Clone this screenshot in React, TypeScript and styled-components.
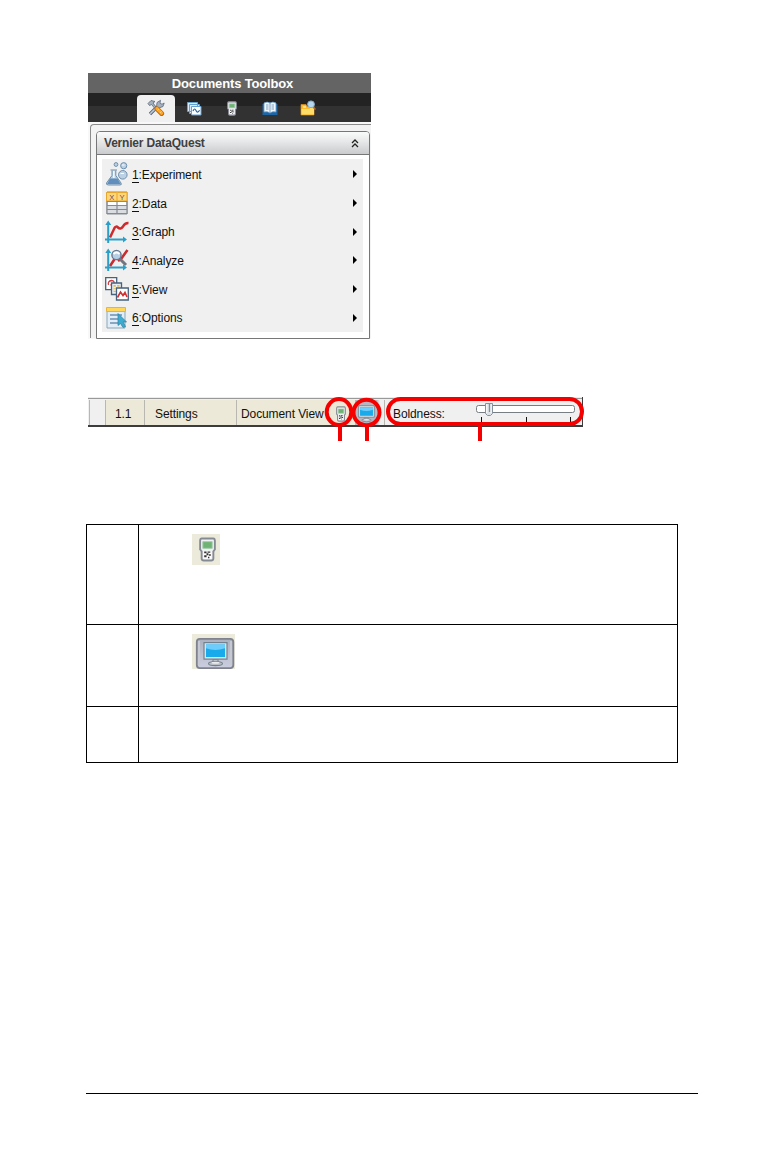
import React, { ReactNode } from 'react';
import styled, { createGlobalStyle } from 'styled-components';

const GlobalStyle = createGlobalStyle`
  * {
    box-sizing: border-box;
  }

  body {
    margin: 0;
    background: #fff;
    font-family: "Liberation Sans", Arial, sans-serif;
    font-size: 12px;
    color: #111;
  }
`;

const Page = styled.main`
  display: flex;
  flex-direction: column;
  align-items: flex-start;
  width: 764px;
  height: 1160px;
  padding: 73px 66px 0 86px;
`;

const Toolbox = styled.section`
  width: 283px;
  height: 266px;
  margin-left: 2px;
  background: #f8f8f8;
`;

const ToolboxTitle = styled.h1`
  height: 20px;
  margin: 0;
  padding-left: 6px;
  background: #646464;
  color: #fff;
  font-size: 13px;
  line-height: 21px;
  letter-spacing: -0.16px;
  text-align: center;
`;

const TabBar = styled.div`
  display: flex;
  height: 29px;
  padding: 2px 0 0 49px;
  background: linear-gradient(#232323 0 13px, #323232 13px 100%);
`;

const Tab = styled.div<{ $active?: boolean }>`
  display: flex;
  align-items: center;
  justify-content: center;
  width: 38px;
  height: 27px;
  padding-bottom: 1px;
  border-radius: 4px 4px 0 0;
  background: ${(props) => (props.$active ? '#f0f0f0' : 'transparent')};
`;

const ToolboxBody = styled.div`
  height: 214px;
  margin: 2px 0 0 2px;
  padding: 6px 1px 0 5px;
  border: solid #8b8b8b;
  border-width: 1px 0 0 1px;
  border-radius: 4px 0 0 0;
  background: #f3f3f3;
`;

const Panel = styled.div`
  height: 208px;
  border: 1px solid #777;
  border-radius: 4px 4px 0 0;
  background: #fff;
  overflow: hidden;
`;

const PanelHeader = styled.div`
  display: flex;
  align-items: center;
  justify-content: space-between;
  height: 23px;
  padding: 0 10px 0 7px;
  border-bottom: 1px solid #777;
  background: linear-gradient(#fbfbfb, #e6e7e8 45%, #c9cbcd);
  color: #404040;
  font-weight: bold;
  letter-spacing: -0.2px;
`;

const Menu = styled.ul`
  display: flex;
  flex-direction: column;
  height: 173px;
  margin: 4px 6px 0 5px;
  padding: 1px 6px 0 3px;
  background: #f0f0f0;
  list-style: none;
`;

const MenuItem = styled.li`
  display: flex;
  align-items: center;
  height: 28.75px;
`;

const MenuLabel = styled.span`
  flex: 1;
  margin-left: 3px;
  padding-top: 2px;
  letter-spacing: -0.1px;
`;

const Shortcut = styled.span`
  display: inline-block;
  height: 14px;
  line-height: 13px;
  border-bottom: 1px solid #111;
`;

const StatusBar = styled.section`
  position: relative;
  display: flex;
  width: 495px;
  height: 30px;
  margin: 58px 0 0 2px;
  border: solid #3c3c3c;
  border-width: 0 1px 2px 0;
  background: linear-gradient(#ededed 0 1px, #999 1px 2px, #f0f0f0 2px);
`;

const StatusCell = styled.div<{ $width: number; $pad?: number; $beige?: boolean; $line?: boolean }>`
  display: flex;
  align-items: center;
  flex: none;
  width: ${(props) => props.$width}px;
  margin-top: 3px;
  padding: 3px 0 0 ${(props) => props.$pad || 0}px;
  border-right: ${(props) => (props.$line ? '1px solid #b9b8b0' : '0')};
  background: ${(props) => (props.$beige ? '#ece9d8' : '#f0f0f0')};
  letter-spacing: -0.1px;
  white-space: nowrap;
`;

const ScreenCell = styled(StatusCell)`
  background: linear-gradient(90deg, #b4b6c1 21px, #f0f0f0 25px);
`;

const Callouts = styled.svg`
  position: absolute;
  left: 0;
  top: 0;
  overflow: visible;
`;

const SliderSlot = styled.div`
  height: 24px;
  margin: -4px 0 0 31px;
`;

const Definitions = styled.section`
  display: grid;
  grid-template-columns: 52px 539px;
  grid-template-rows: 100px 82px 56px;
  width: 592px;
  margin-top: 97px;
  border: solid #000;
  border-width: 1px 0 0 1px;
`;

const DefinitionCell = styled.div`
  border: solid #000;
  border-width: 0 1px 1px 0;
`;

const IconTile = styled.div<{ $width: number; $height: number }>`
  display: flex;
  width: ${(props) => props.$width}px;
  height: ${(props) => props.$height}px;
  margin: 9px 0 0 53px;
  background: #eceadb;
`;

const Footer = styled.footer`
  width: 612px;
  margin-top: 330px;
  border-top: 1px solid #000;
`;

type IconProps = {
  width?: number;
  height?: number;
};

function ToolsIcon() {
  return (
    <svg width="18" height="18" viewBox="0 0 18 18" fill="none">
      <path d="M3 15 L10 8" stroke="#536378" strokeWidth="3.2" />
      <path d="M3.2 14.8 L10 8" stroke="#c0cad6" strokeWidth="1.6" />
      <path d="M9.5 8 L10 3.5 L13.5 1.3 L13 4.2 L15 5.2 L17.2 4 L16 7.5 L12 9 Z" fill="#a4b0be" stroke="#4d5e74" strokeWidth=".7" />
      <path d="M1 4.5 L4 1.5 L8 2.5 L6 4 L9 8 L7.5 9 L4.5 5.5 L2.5 6.5 Z" fill="#a5b1bf" stroke="#56667b" strokeWidth=".8" />
      <path d="M10 9.8 L14.6 14.4" stroke="#c86600" strokeWidth="5" strokeLinecap="round" />
      <path d="M10 9.6 L14.5 14.1" stroke="#ffa722" strokeWidth="3.4" strokeLinecap="round" />
      <path d="M10.5 11.5 L12 10 M13 14 L14.5 12.5" stroke="#ffe09a" strokeWidth=".8" />
    </svg>
  );
}

function PagesIcon() {
  return (
    <svg width="15" height="15" viewBox="0 0 15 15" fill="#d9eafa" stroke="#67a1cf">
      <path d="M.5 1.5h10v9h-10z M2.5 3.5h10v9h-10z" />
      <path d="M4.5 5.5h9.5v8.5h-9.5z" fill="#fff" />
      <path d="M6 10 Q7.5 6.3 9 9.5 T12.6 9.3" fill="none" stroke="#2767a3" strokeWidth="1.2" />
    </svg>
  );
}

function Handheld({ width = 10, height = 15 }: IconProps) {
  return (
    <svg width={width} height={height} viewBox="0 0 18 26" preserveAspectRatio="none">
      <path d="M3 1.5 H15 Q16.8 1.5 16.8 4 V13 L15.2 15 V22.5 Q15 24.5 13 24.5 H5 Q3 24.5 2.8 22.5 V15 L1.2 13 V4 Q1.2 1.5 3 1.5z" fill="#eff1f4" stroke="#868b93" strokeWidth="2" />
      <path d="M4 4.8h10v7H4z" fill="#6fb374" stroke="#a8cdb0" />
      <path d="M5 15h8v7.5H5z" fill="#fff" />
      <path d="M5.5 15h2.5v2H5.5z M9 15h3v1.5H9z M8 17h2v2H8z M5.5 19h2.5v2H5.5z M10.5 18h2v1.5h-2z M9.5 20.5h1.5v1.5H9.5z" fill="#303030" />
    </svg>
  );
}

function BookIcon() {
  return (
    <svg width="16" height="15" viewBox="0 0 16 15">
      <path d="M.5 3h15v11H.5z" fill="#1e65a6" />
      <path d="M2 2 Q5.2.2 8 2 Q10.8.2 14 2 V11 Q10.5 10 8 12 Q5.5 10 2 11z" fill="#f2f8fc" stroke="#6698c3" strokeWidth=".8" />
      <path d="M8 2v10 M4 4h2.5 M4 6h2.5 M4 8h2.5 M9.5 4H12 M9.5 6H12 M9.5 8H12" stroke="#7aa0c0" strokeWidth="1" />
    </svg>
  );
}

function FolderSearchIcon() {
  return (
    <svg width="16" height="16" viewBox="0 0 16 16">
      <path d="M1 4.5h5l1 2h7v8.5H1z" fill="#ffb928" stroke="#da8e19" strokeWidth=".7" />
      <path d="M1.5 9h8l1.5-2h3v7.5H1.5z" fill="#ffdd69" />
      <path d="M12.5 6.5 L15.5 9.5" stroke="#b06b38" strokeWidth="1.5" />
      <circle cx="11" cy="4.3" r="3.4" fill="#b6d7ed" stroke="#7eaed2" />
      <path d="M3 7h3" stroke="#fff" />
    </svg>
  );
}

function ExperimentIcon() {
  return (
    <svg width="24" height="24" viewBox="0 0 24 24" fill="#bdd1e5" stroke="#6e8fac">
      <path d="M5.5 8h6.5 M7 8.5v5 L1.5 21 Q1 23 3.5 23 H15 Q17 23 16 21 L10.8 13.5V8.5" />
      <path d="M5 16.5h7.5l3 5.5H2.2z" fill="#5f8dbc" stroke="none" />
      <path d="M8.8 9v7" stroke="#f5fbff" strokeWidth="1.5" />
      <circle cx="11" cy="2.5" r="1.9" />
      <circle cx="18.7" cy="3.7" r="3.1" />
      <circle cx="17.8" cy="12.8" r="4.3" />
      <path d="M17 3h2.5 M15.5 11.5h3.5" stroke="#fff" />
    </svg>
  );
}

function DataIcon() {
  return (
    <svg width="24" height="24" viewBox="0 0 24 24">
      <path d="M2 1h20v22H2z" fill="#fff" stroke="#8b8e93" />
      <path d="M2 15h20v8H2z" fill="#dadde1" />
      <path d="M1.5 1.5h20.5v8.5H1.5z" fill="#ffd67a" stroke="#e7a52b" />
      <path d="M2 10.5h20 M2 14.5h20 M2 18.5h20 M2 22.5h20 M2 10v13 M22 10v13 M12 10v13" stroke="#868b91" strokeWidth="1.2" />
      <path d="M12 1v9" stroke="#efb23c" strokeWidth="1.4" />
      <text x="4.3" y="8.5" fontSize="7.5" fill="#4e5a66">X</text>
      <text x="14.5" y="8.5" fontSize="7.5" fill="#4e5a66">Y</text>
    </svg>
  );
}

function GraphIcon({ analyze = false }: { analyze?: boolean }) {
  return (
    <svg width="24" height="24" viewBox="0 0 24 24" fill="none">
      <path d="M3.2 23V3 M0 19.5h20" stroke="#2b9fc7" strokeWidth="2" />
      <path d="M.3 5 L3.2 .5 L6.2 5z M18 16.5 L22 19.5 L18 22.5z" fill="#2b9fc7" />
      {analyze ? (
        <>
          <path d="M5 18 L10 10.5 M13 13 L16 11 L22.5 2" stroke="#c52d30" strokeWidth="2.6" />
          <path d="M14.5 10.5 L21 17" stroke="#73767e" strokeWidth="3" />
          <circle cx="11.5" cy="7" r="4.6" fill="#b5d0e6" stroke="#657993" strokeWidth="1.4" />
          <path d="M8.5 6 Q11.5 3 14.5 6" stroke="#fff" strokeWidth="1.8" />
        </>
      ) : (
        <path d="M5 17.5 L9.5 8 Q11 5.5 13 7.5 Q15.5 10 18 6.5 Q20 2.8 23.5 3" stroke="#cf2b2d" strokeWidth="2.5" />
      )}
    </svg>
  );
}

function ViewIcon() {
  return (
    <svg width="24" height="24" viewBox="0 0 24 24" fill="#fff" stroke="#47627e" strokeWidth="1.3">
      <path d="M.7.7h11v12H.7z" />
      <path d="M3.5 8 Q2.5 4 6.5 3.5 Q10.5 4 8.5 7.5 Q7 9 5.5 7.5" fill="none" stroke="#cf3f41" />
      <path d="M6.5 6h10v11.5H6.5z" fill="#e7edf1" />
      <path d="M8.5 8h6v7H8.5z" fill="#e5bd54" stroke="none" />
      <path d="M8.5 10.5h6 M8.5 13h6 M11.5 8v7" stroke="#ecf2f5" />
      <path d="M11.5 11h11.8v12H11.5z" />
      <path d="M12.5 20.5 L15.5 15 L18 18.5 L20 15.5 L22 20" fill="none" stroke="#cf3033" strokeWidth="1.6" />
    </svg>
  );
}

function OptionsIcon() {
  return (
    <svg width="24" height="24" viewBox="0 0 24 24">
      <path d="M2 3h18v19H2z" fill="#e2eef7" stroke="#89a6ba" />
      <path d="M1.5 1.5h19v4h-19z" fill="#ffd75d" stroke="#e8b23d" />
      <path d="M5 9h12 M5 13h8 M5 17h9" stroke="#6d91b2" strokeWidth="1.5" />
      <path d="M13 7.5 L21.5 16 L18 16 L20.5 20.5 L18 21.5 L15.5 17.5 L13 19.5z" fill="#3eacd2" stroke="#277f9f" strokeWidth=".7" />
    </svg>
  );
}

function Monitor({ width = 20, height = 20 }: IconProps) {
  return (
    <svg width={width} height={height} viewBox="0 0 25 25" preserveAspectRatio="none">
      <path d="M10 17h5v3H10z" fill="#b9bfc5" stroke="#74818c" />
      <ellipse cx="12.5" cy="21.2" rx="7" ry="2" fill="#b9bfc5" stroke="#74818c" />
      <ellipse cx="12.5" cy="20.4" rx="4" ry="1" fill="#e8ecef" />
      <path d="M1 1h23v16H1z" fill="#dae3e7" stroke="#73818f" strokeWidth="1.2" />
      <path d="M3 3h19v12H3z" fill="#18aaea" />
      <path d="M3 3h19v3.5Q12 10 3 6.5z" fill="#6cccfb" />
    </svg>
  );
}

function MonitorTile() {
  return (
    <svg width="43" height="35" viewBox="0 0 43 35">
      <defs>
        <linearGradient id="tile-face" x1="0" y1="0" x2="0" y2="1">
          <stop offset="0" stopColor="#aab0bd" />
          <stop offset="1" stopColor="#cbcedf" />
        </linearGradient>
      </defs>
      <rect x="4.8" y="4.8" width="36.5" height="29.3" rx="3" fill="url(#tile-face)" stroke="#80838d" strokeWidth="1.8" />
      <path d="M7 7v24 M39 7v24" stroke="#c7c9d2" strokeWidth="2" />
      <svg x="11" y="7.5" width="25" height="26">
        <Monitor width={25} height={26} />
      </svg>
    </svg>
  );
}

function Slider() {
  return (
    <svg width="100" height="24" viewBox="0 0 100 24">
      <rect x=".5" y="5.5" width="98" height="7" rx="2" fill="#fff" stroke="#777e84" />
      <path d="M9.5 3.5h7v10l-2 2h-3l-2-2z" fill="#dce2e7" stroke="#87919b" />
      <path d="M10.8 4v9 M15 4v9" stroke="#fff" />
      <path d="M13.5 4v8" stroke="#838e99" strokeWidth="1.3" />
      <path d="M5.5 17v5 M50.5 17v5 M94.5 17v5" stroke="#111" />
    </svg>
  );
}

type MenuEntry = {
  label: string;
  icon: ReactNode;
};

const menuEntries: MenuEntry[] = [
  { label: 'Experiment', icon: <ExperimentIcon /> },
  { label: 'Data', icon: <DataIcon /> },
  { label: 'Graph', icon: <GraphIcon /> },
  { label: 'Analyze', icon: <GraphIcon analyze /> },
  { label: 'View', icon: <ViewIcon /> },
  { label: 'Options', icon: <OptionsIcon /> },
];

function DocumentsToolbox() {
  return (
    <Toolbox>
      <ToolboxTitle>Documents Toolbox</ToolboxTitle>
      <TabBar>
        <Tab $active><ToolsIcon /></Tab>
        <Tab><PagesIcon /></Tab>
        <Tab><Handheld /></Tab>
        <Tab><BookIcon /></Tab>
        <Tab><FolderSearchIcon /></Tab>
      </TabBar>
      <ToolboxBody>
        <Panel>
          <PanelHeader>
            Vernier DataQuest
            <svg width="8" height="9" viewBox="0 0 8 9" fill="none" stroke="#222" strokeWidth="1.3">
              <path d="M1 4 L4 1 L7 4 M1 8 L4 5 L7 8" />
            </svg>
          </PanelHeader>
          <Menu>
            {menuEntries.map((entry, index) => (
              <MenuItem key={entry.label}>
                {entry.icon}
                <MenuLabel>
                  <Shortcut>{index + 1}</Shortcut>:{entry.label}
                </MenuLabel>
                <svg width="4" height="8" viewBox="0 0 4 8">
                  <path d="M0 0 L4 4 L0 8z" />
                </svg>
              </MenuItem>
            ))}
          </Menu>
        </Panel>
      </ToolboxBody>
    </Toolbox>
  );
}

function DocumentStatus() {
  return (
    <StatusBar>
      <StatusCell $width={2} $line />
      <StatusCell $width={16} $line />
      <StatusCell $width={39} $pad={9} $beige $line>1.1</StatusCell>
      <StatusCell $width={92} $pad={10} $beige $line>Settings</StatusCell>
      <StatusCell $width={96} $pad={4} $beige>Document View</StatusCell>
      <StatusCell $width={22} $pad={3} $beige><Handheld height={16} /></StatusCell>
      <ScreenCell $width={30} $pad={3} $line><Monitor width={17} height={18} /></ScreenCell>
      <StatusCell $width={196} $pad={8}>
        Boldness:
        <SliderSlot><Slider /></SliderSlot>
      </StatusCell>
      <Callouts width="495" height="44" fill="none" stroke="#f50000" strokeWidth="4">
        <ellipse cx="251" cy="15" rx="12.3" ry="13" />
        <ellipse cx="278.5" cy="15.5" rx="13" ry="12.7" />
        <rect x="300" y="2" width="194" height="25" rx="12.5" />
        <path d="M252 27v17 M279 28v16 M392 27v17" />
      </Callouts>
    </StatusBar>
  );
}

export default function App() {
  return (
    <>
      <GlobalStyle />
      <Page>
        <DocumentsToolbox />
        <DocumentStatus />
        <Definitions>
          <DefinitionCell />
          <DefinitionCell>
            <IconTile $width={28} $height={31}>
              <svg width="28" height="31">
                <svg x="7" y="3"><Handheld width={17} height={25} /></svg>
              </svg>
            </IconTile>
          </DefinitionCell>
          <DefinitionCell />
          <DefinitionCell>
            <IconTile $width={43} $height={35}><MonitorTile /></IconTile>
          </DefinitionCell>
          <DefinitionCell />
          <DefinitionCell />
        </Definitions>
        <Footer />
      </Page>
    </>
  );
}
